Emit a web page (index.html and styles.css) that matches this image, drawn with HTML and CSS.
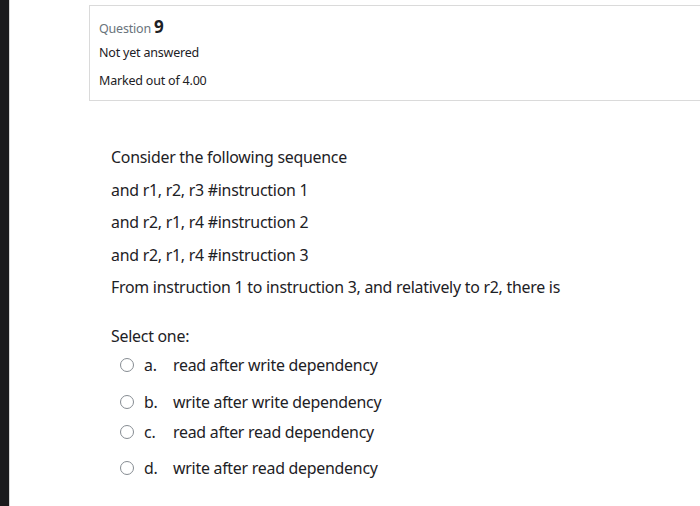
FILE: index.html
```html
<!DOCTYPE html>
<html>
<head>
<meta charset="utf-8">
<link rel="stylesheet" href="styles.css">
</head>
<body>
<div class="page">
  <div class="sidebar"></div>
  <div class="main">
    <div class="info">
      <div class="qno">Question <span class="num">9</span></div>
      <div class="state">Not yet answered</div>
      <div class="grade">Marked out of 4.00</div>
    </div>
    <div class="content">
      <p class="line first">Consider the following sequence</p>
      <p class="line">and r1, r2, r3 #instruction 1</p>
      <p class="line">and r2, r1, r4 #instruction 2</p>
      <p class="line">and r2, r1, r4 #instruction 3</p>
      <p class="line">From instruction 1 to instruction 3, and relatively to r2, there is</p>
      <p class="prompt">Select one:</p>
      <div class="answers">
        <label class="opt opt-a"><span class="radio"></span><span class="letter">a.</span><span class="text">read after write dependency</span></label>
        <label class="opt opt-b"><span class="radio"></span><span class="letter">b.</span><span class="text">write after write dependency</span></label>
        <label class="opt opt-c"><span class="radio"></span><span class="letter">c.</span><span class="text">read after read dependency</span></label>
        <label class="opt opt-d"><span class="radio"></span><span class="letter">d.</span><span class="text">write after read dependency</span></label>
      </div>
    </div>
  </div>
</div>
</body>
</html>
```
FILE: styles.css
```css
html, body {
  margin: 0;
  padding: 0;
  background: #ffffff;
}
body {
  font-family: "Noto Sans", "Open Sans", sans-serif;
  color: #1d2125;
}
.page {
  display: flex;
  width: 700px;
  height: 506px;
  overflow: hidden;
}
.sidebar {
  width: 9px;
  flex: none;
  background: #1b1b1d;
  border-right: 1px solid #d8d8d8;
}
.main {
  flex: 1;
  padding: 5px 0 0 79px;
  overflow: hidden;
}
.info {
  border: 1px solid #dadada;
  border-right: none;
  height: 96px;
  box-sizing: border-box;
  padding: 11px 0 0 9px;
  margin-right: -10px;
  font-size: 12.5px;
  letter-spacing: -0.2px;
}
.qno {
  color: #6a737b;
  line-height: 20px;
  height: 22px;
}
.num {
  color: #1d2125;
  font-weight: 700;
  font-size: 17px;
}
.state {
  line-height: 20px;
  height: 27px;
  padding-top: 4px;
  box-sizing: border-box;
}
.grade {
  line-height: 20px;
  padding-top: 5px;
}
.content {
  padding-left: 22px;
  padding-top: 46px;
  font-size: 15.9px;
  letter-spacing: -0.25px;
}
.line {
  margin: 0;
  line-height: 20px;
  height: 32.5px;
}
.prompt {
  margin: 16px 0 0 0;
  line-height: 20px;
}
.answers {
  display: flex;
  flex-direction: column;
  padding-left: 9px;
}
.opt {
  display: flex;
  align-items: center;
  height: 20px;
}
.opt-a { margin-top: 9px; }
.opt-b { margin-top: 17px; }
.opt-c { margin-top: 10px; }
.opt-d { margin-top: 16px; }
.radio {
  width: 12px;
  height: 12px;
  border: 1.5px solid #868c92;
  border-radius: 50%;
  flex: none;
}
.letter {
  width: 29px;
  margin-left: 10px;
}
.text {
  white-space: nowrap;
}
```
